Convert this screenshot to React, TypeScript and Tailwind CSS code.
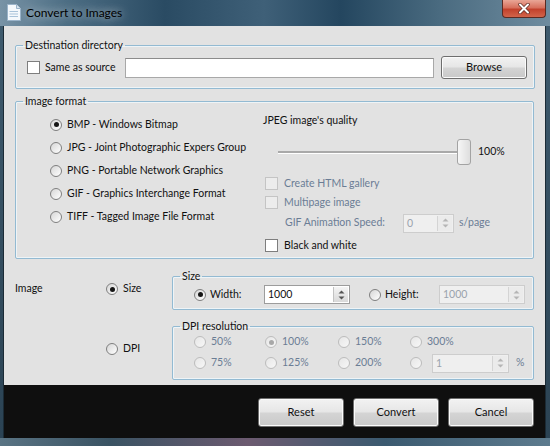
import React from 'react';

// Win7-style dialog: "Convert to Images"

const Radio = ({ checked = false, disabled = false }: { checked?: boolean; disabled?: boolean }) => (
  <span
    className={`flex w-[12px] h-[12px] shrink-0 items-center justify-center rounded-full border ${
      disabled
        ? 'border-[#bcbcbc] bg-[linear-gradient(135deg,#e6e6e6,#f7f7f7)]'
        : 'border-[#7f7f7f] bg-[linear-gradient(135deg,#d6d6d6,#ffffff)]'
    }`}
  >
    {checked && <span className={`w-[5px] h-[5px] rounded-full ${disabled ? 'bg-[#a8a8a8]' : 'bg-[#151515]'}`} />}
  </span>
);

const Check = ({ disabled = false }: { disabled?: boolean }) => (
  <span
    className={`block w-[13px] h-[13px] shrink-0 border ${
      disabled ? 'border-[#c4c4c4] bg-[#ececec]' : 'border-[#7e7e7e] bg-white'
    }`}
  />
);

const SpinArrows = ({ disabled = false }: { disabled?: boolean }) => (
  <span
    className={`flex w-[15px] h-full shrink-0 flex-col items-center justify-center gap-[2px] border-l ${
      disabled ? 'border-[#d4d4d4] bg-[#ebebeb]' : 'border-[#c2c2c2] bg-[linear-gradient(#f4f4f4,#d9d9d9)]'
    }`}
  >
    <svg width="7" height="4" viewBox="0 0 7 4">
      <path d="M0.5 3.5 L3.5 0.5 L6.5 3.5 Z" fill={disabled ? '#b5b5b5' : '#555'} />
    </svg>
    <svg width="7" height="4" viewBox="0 0 7 4">
      <path d="M0.5 0.5 L3.5 3.5 L6.5 0.5 Z" fill={disabled ? '#b5b5b5' : '#555'} />
    </svg>
  </span>
);

const Spin = ({ value, width, disabled = false }: { value: string; width: string; disabled?: boolean }) => (
  <div
    className={`flex h-[19px] ${width} border p-[1px] ${
      disabled ? 'border-[#cdcdcd] bg-[#efefef] text-[#9aa3ad]' : 'border-[#9c9c9c] bg-white text-[#111]'
    }`}
  >
    <span className="flex-1 pl-[2px] leading-[15px]">{value}</span>
    <SpinArrows disabled={disabled} />
  </div>
);

const WinButton = ({ label, h = 'h-[29px]' }: { label: string; h?: string }) => (
  <button
    className={`${h} w-[86px] rounded-[3px] border border-[#6e6e6e] bg-[linear-gradient(#f2f2f2_0%,#e6e6e6_48%,#d4d4d4_52%,#c9c9c9_100%)] text-[11px] text-[#111] shadow-[inset_0_0_0_1px_#fbfbfb]`}
  >
    {label}
  </button>
);

const Legend = ({ children }: { children: React.ReactNode }) => (
  <legend className="ml-[7px] px-[2px] leading-[14px] text-[#111]">{children}</legend>
);

const fieldset = 'border border-[#93bad2] rounded-[2px] shadow-[inset_0_0_0_1px_#eef4f7]';

const formats = [
  'BMP - Windows Bitmap',
  'JPG - Joint Photographic Expers Group',
  'PNG - Portable Network Graphics',
  'GIF - Graphics Interchange Format',
  'TIFF - Tagged Image File Format',
];

const disabledText = 'text-[#6b7d95]';

export default function App() {
  return (
    <div className="w-[550px] h-[446px] flex flex-col overflow-hidden bg-[#253d50] font-['Lato','Liberation_Sans',sans-serif] text-[10.5px] text-[#111]">
      {/* title bar */}
      <div className="h-[26px] flex items-start bg-[linear-gradient(90deg,#7893a6_0%,#4d6e84_12%,#2a4b63_30%,#3f6078_48%,#24465f_62%,#4a6b80_80%,#6f8c9f_100%)]">
        <svg width="14" height="17" viewBox="0 0 14 17" className="ml-[7px] mt-[4px]">
          <path d="M0.5 0.5 H9.5 L13.5 4.5 V16.5 H0.5 Z" fill="#f4f8fc" stroke="#9ab3c9" />
          <path d="M9.5 0.5 V4.5 H13.5" fill="#d7e3ee" stroke="#9ab3c9" />
          <path d="M2.5 7.5 H11 M2.5 10 H11 M2.5 12.5 H11" stroke="#a9c3da" />
        </svg>
        <span className="ml-[5px] mt-[5px] text-[12px] leading-[16px] text-black [text-shadow:0_0_8px_#ffffffcc]">
          Convert to Images
        </span>
        <div className="ml-auto mr-[4px] w-[44px] h-[18px] rounded-b-[4px] border border-t-0 border-[#5b2a22] bg-[linear-gradient(#e9a696_0%,#d7705d_45%,#c2412c_55%,#d2644a_100%)] flex items-center justify-center">
          <svg width="12" height="11" viewBox="0 0 12 11">
            <path d="M2 1.5 L10 9.5 M10 1.5 L2 9.5" stroke="#5b2a22" strokeWidth="3.4" strokeLinecap="round" />
            <path d="M2 1.5 L10 9.5 M10 1.5 L2 9.5" stroke="#ffffff" strokeWidth="2" strokeLinecap="round" />
          </svg>
        </div>
      </div>

      <div className="flex flex-1">
        <div className="w-[4px] bg-[linear-gradient(#3e5a6d,#2b4354)] border-r border-[#1b2b36]" />
        <div className="w-[541px] flex flex-col">
          {/* main panel */}
          <div className="h-[359px] bg-[#e2e2e2] px-[11px] pt-[12px]">
            <fieldset className={fieldset}>
              <Legend>Destination directory</Legend>
              <div className="flex items-center pt-[4px] pb-[9px] pl-[11px] pr-[7px]">
                <Check />
                <span className="ml-[5px] w-[80px]">Same as source</span>
                <div className="h-[20px] w-[309px] border border-[#a8a8a8] border-t-[#8c8c8c] bg-white" />
                <div className="ml-[7px]">
                  <WinButton label="Browse" h="h-[23px]" />
                </div>
              </div>
            </fieldset>

            <fieldset className={`${fieldset} mt-[5px]`}>
              <Legend>Image format</Legend>
              <div className="flex pb-[3px]">
                <div className="w-[247px] pl-[34px] pt-[5px]">
                  {formats.map((f, i) => (
                    <div key={f} className="h-[23px] flex items-center gap-[5px]">
                      <Radio checked={i === 0} />
                      <span>{f}</span>
                    </div>
                  ))}
                </div>
                <div className="flex-1 pt-[4px]">
                  <div className="h-[16px] leading-[16px]">JPEG image's quality</div>
                  <div className="mt-[11px] h-[26px] flex items-center">
                    <div className="ml-[15px] w-[193px] h-[26px] relative flex items-center">
                      <div className="w-full h-[3px] border-t-2 border-[#a9a9a9] border-b border-b-white bg-[#d4d4d4]" />
                      <div className="absolute right-0 top-0 w-[14px] h-[26px] rounded-[3px] border border-[#a3a3a3] bg-[linear-gradient(90deg,#f6f6f6,#dedede)]" />
                    </div>
                    <span className="ml-[7px]">100%</span>
                  </div>
                  <div className="mt-[9px] h-[19px] flex items-center pl-[2px] gap-[6px]">
                    <Check disabled />
                    <span className={disabledText}>Create HTML gallery</span>
                  </div>
                  <div className="h-[19px] flex items-center pl-[2px] gap-[6px]">
                    <Check disabled />
                    <span className={disabledText}>Multipage image</span>
                  </div>
                  <div className="h-[22px] flex items-center pl-[22px]">
                    <span className={`w-[118px] ${disabledText}`}>GIF Animation Speed:</span>
                    <Spin value="0" width="w-[51px]" disabled />
                    <span className={`ml-[5px] ${disabledText}`}>s/page</span>
                  </div>
                  <div className="mt-[2px] h-[19px] flex items-center pl-[2px] gap-[6px]">
                    <Check />
                    <span>Black and white</span>
                  </div>
                </div>
              </div>
            </fieldset>

            <div className="flex">
              <div className="w-[157px]">
                <div className="mt-[21px] h-[18px] flex items-center">
                  <span className="w-[91px]">Image</span>
                  <Radio checked />
                  <span className="ml-[5px]">Size</span>
                </div>
                <div className="mt-[42px] h-[18px] flex items-center pl-[91px]">
                  <Radio />
                  <span className="ml-[5px]">DPI</span>
                </div>
              </div>
              <div className="flex-1">
                <fieldset className={`${fieldset} mt-[10px]`}>
                  <Legend>Size</Legend>
                  <div className="flex items-center h-[19px] mt-[2px] mb-[5px] pl-[21px]">
                    <Radio checked />
                    <span className="ml-[4px] w-[54px]">Width:</span>
                    <Spin value="1000" width="w-[86px]" />
                    <span className="ml-[19px]">
                      <Radio />
                    </span>
                    <span className="ml-[4px] w-[54px]">Height:</span>
                    <Spin value="1000" width="w-[86px]" disabled />
                  </div>
                </fieldset>
                <fieldset className={`${fieldset} mt-[9px]`}>
                  <Legend>DPI resolution</Legend>
                  <div className="grid grid-cols-[71px_73px_72px_1fr] grid-rows-[18px_18px] gap-y-[3px] pl-[21px] pb-[7px]">
                    {['50%', '100%', '150%', '300%'].map((p) => (
                      <div key={p} className="flex items-center gap-[5px]">
                        <Radio disabled checked={p === '100%'} />
                        <span className={disabledText}>{p}</span>
                      </div>
                    ))}
                    {['75%', '125%', '200%'].map((p) => (
                      <div key={p} className="flex items-center gap-[5px]">
                        <Radio disabled />
                        <span className={disabledText}>{p}</span>
                      </div>
                    ))}
                    <div className="flex items-center">
                      <Radio disabled />
                      <span className="ml-[10px]">
                        <Spin value="1" width="w-[77px]" disabled />
                      </span>
                      <span className={`ml-[7px] ${disabledText}`}>%</span>
                    </div>
                  </div>
                </fieldset>
              </div>
            </div>
          </div>

          {/* button strip */}
          <div className="h-[53px] bg-[#0f0f0f] flex justify-end gap-[9px] pt-[13px] pr-[11px]">
            <WinButton label="Reset" />
            <WinButton label="Convert" />
            <WinButton label="Cancel" />
          </div>
        </div>
        <div className="w-[5px] bg-[linear-gradient(#3e5a6d,#2b4354)] border-l border-[#1b2b36]" />
      </div>

      <div className="h-[8px] bg-[linear-gradient(90deg,#5a7484_0%,#3a5363_20%,#6c5a70_45%,#3b5a70_70%,#5d7b8e_100%)]" />
    </div>
  );
}
